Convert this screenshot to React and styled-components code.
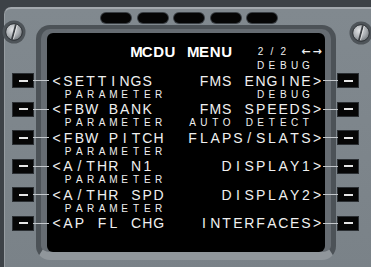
import React from "react";
import styled, { createGlobalStyle } from "styled-components";

const CELL = 11.33;

const GlobalStyle = createGlobalStyle`
  html, body {
    margin: 0;
    padding: 0;
    background: #3d4247;
  }
`;

const Frame = styled.div`
  width: 371px;
  height: 267px;
  overflow: hidden;
  box-sizing: border-box;
  padding: 7px 0 0 4px;
  background: #3d4247;
`;

const Panel = styled.div`
  height: 260px;
  background: linear-gradient(#81898f, #7a8288);
  border-top: 2px solid #a3a9ae;
  border-left: 1px solid #979da2;
  border-top-left-radius: 7px;
  display: grid;
  grid-template-columns: 31px 300px 36px;
  grid-template-rows: 16px 1fr;
`;

const PillRow = styled.div`
  grid-column: 2;
  grid-row: 1;
  display: flex;
  gap: 6.5px;
  padding: 4px 0 0 65px;
`;

const Pill = styled.div`
  width: 30px;
  height: 10px;
  border-radius: 5px;
  background: #050505;
  box-shadow: 0 0 0 1px #3a3f44;
`;

const Side = styled.div`
  grid-column: ${(p) => (p.$right ? 3 : 1)};
  grid-row: 1 / 3;
  display: flex;
  flex-direction: column;
`;

const ScrewWrap = styled.div`
  width: 24px;
  height: 24px;
  margin: ${(p) => (p.$right ? "12px 0 0 13px" : "11px 0 0 -3px")};
`;

const ButtonList = styled.div`
  display: flex;
  flex-direction: column;
  gap: 13.5px;
  margin: ${(p) => (p.$right ? "28px 0 0 1px" : "29px 0 0 7px")};
`;

const Key = styled.div`
  position: relative;
  width: 22px;
  height: 15px;
  box-sizing: border-box;
  background: #060606;
  border: 1px solid #2b2f33;
  display: flex;
  align-items: center;
  justify-content: center;

  &::before {
    content: "";
    width: 9px;
    height: 2px;
    background: #e6e6e6;
  }

  &::after {
    content: "";
    position: absolute;
    top: 6px;
    ${(p) => (p.$right ? "right: 100%; width: 15px;" : "left: 100%; width: 16px;")}
    height: 1px;
    background: #c4c8cc;
  }
`;

const Bezel = styled.div`
  grid-column: 2;
  grid-row: 2;
  height: 235px;
  box-sizing: border-box;
  background: #666c72;
  border-style: solid;
  border-width: 4px 5px 8px 5px;
  border-color: #4c5257 #4c5257 #90969b #4c5257;
  border-radius: 14px;
  padding: 4px 6px 0 6px;
`;

const Screen = styled.div`
  height: 219px;
  box-sizing: border-box;
  background: #000;
  border-radius: 6px;
  padding: 12px 2px 0 4px;
  font-family: "Liberation Sans", Arial, sans-serif;
  color: #f0f0f0;
`;

const Line = styled.div`
  display: flex;
  height: 14.25px;
  line-height: 14.25px;
`;

const sizes = {
  small: "font-size: 10px;",
  large: "font-size: 14px;",
  title: "font-size: 15px; font-weight: 700; color: #fff;",
  arrow: "font-size: 11px; font-weight: 700; font-family: 'DejaVu Sans', sans-serif;",
};

const Cell = styled.span`
  display: inline-block;
  width: ${CELL}px;
  text-align: center;
  ${(p) => sizes[p.$size]}
`;

function Chars({ text, size }) {
  return text.split("").map((ch, i) => (
    <Cell key={i} $size={size}>
      {ch === " " ? "\u00a0" : ch}
    </Cell>
  ));
}

function Screw() {
  return (
    <svg width="24" height="24" viewBox="0 0 24 24">
      <defs>
        <radialGradient id="metal" cx="40%" cy="35%" r="70%">
          <stop offset="0" stopColor="#e2e4e6" />
          <stop offset="0.6" stopColor="#a9adb1" />
          <stop offset="1" stopColor="#6d7276" />
        </radialGradient>
      </defs>
      <circle cx="12" cy="12" r="11.5" fill="#4e5459" />
      <circle cx="12" cy="12" r="8.3" fill="url(#metal)" stroke="#2c3034" strokeWidth="1" />
      <line x1="14" y1="4.5" x2="10" y2="19.5" stroke="#3a3e42" strokeWidth="2" />
      <line x1="15.2" y1="5" x2="11.4" y2="19.2" stroke="#f0f0f0" strokeWidth="0.8" />
    </svg>
  );
}

const pad = (l, r) => l + " ".repeat(24 - l.length - r.length) + r;

const rows = [
  ["", "DEBUG ", "<SETTINGS", "FMS ENGINE>"],
  [" PARAMETER", "DEBUG ", "<FBW BANK", "FMS SPEEDS>"],
  [" PARAMETER", "AUTO DETECT ", "<FBW PITCH", "FLAPS/SLATS>"],
  [" PARAMETER", "", "<A/THR N1", "DISPLAY1>"],
  [" PARAMETER", "", "<A/THR SPD", "DISPLAY2>"],
  [" PARAMETER", "", "<AP FL CHG", "INTERFACES>"],
];

export default function App() {
  return (
    <>
      <GlobalStyle />
      <Frame>
        <Panel>
          <PillRow>
            {[0, 1, 2, 3, 4].map((i) => (
              <Pill key={i} />
            ))}
          </PillRow>
          <Side>
            <ScrewWrap>
              <Screw />
            </ScrewWrap>
            <ButtonList>
              {rows.map((_, i) => (
                <Key key={i} />
              ))}
            </ButtonList>
          </Side>
          <Bezel>
            <Screen>
              <Line>
                <Chars text="       MCDU MENU" size="title" />
                <Chars text="  2/2 " size="small" />
                <Chars text="←→" size="arrow" />
              </Line>
              {rows.map(([ll, lr, dl, dr], i) => (
                <React.Fragment key={i}>
                  <Line>
                    <Chars text={pad(ll, lr)} size="small" />
                  </Line>
                  <Line>
                    <Chars text={pad(dl, dr)} size="large" />
                  </Line>
                </React.Fragment>
              ))}
            </Screen>
          </Bezel>
          <Side $right>
            <ScrewWrap $right>
              <Screw />
            </ScrewWrap>
            <ButtonList $right>
              {rows.map((_, i) => (
                <Key key={i} $right />
              ))}
            </ButtonList>
          </Side>
        </Panel>
      </Frame>
    </>
  );
}
